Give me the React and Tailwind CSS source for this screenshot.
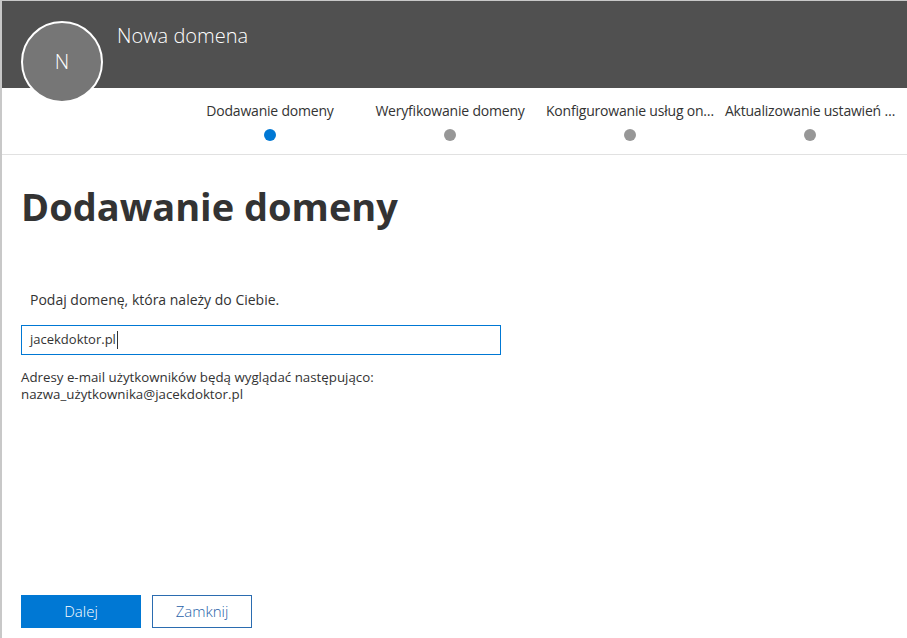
import React from 'react';

const steps = [
  { label: 'Dodawanie domeny', active: true },
  { label: 'Weryfikowanie domeny' },
  { label: 'Konfigurowanie usług on\u2026' },
  { label: 'Aktualizowanie ustawień \u2026' },
];

export default function App() {
  return (
    <div
      className="flex h-[638px] w-[907px] flex-col overflow-hidden border-t border-l-2 border-[#c8c8c8] bg-white text-[#333]"
      style={{ fontFamily: '"Open Sans", "Noto Sans", sans-serif' }}
    >
      {/* header */}
      <div className="relative h-[87px] shrink-0 bg-[#505050]">
        <div className="absolute left-[19px] top-[20px] flex h-[82px] w-[82px] items-center justify-center rounded-full border-2 border-white bg-[#767676] text-[20px] font-light text-white">
          N
        </div>
        <div className="pl-[115px] pt-[21px] text-[20px] font-light leading-[28px] text-white">Nowa domena</div>
      </div>

      {/* steps */}
      <div className="flex h-[67px] shrink-0 border-b border-[#e1e1e1] pl-[178px] pt-[13px]">
        {steps.map((s) => (
          <div key={s.label} className="flex w-[180px] flex-col items-center">
            <div className="whitespace-nowrap text-[14px] leading-[20px] tracking-[-0.2px] text-[#333]">{s.label}</div>
            <div className={`mt-[8px] h-[12px] w-[12px] rounded-full ${s.active ? 'bg-[#0078d4]' : 'bg-[#979797]'}`} />
          </div>
        ))}
      </div>

      {/* body */}
      <div className="flex flex-1 flex-col pl-[19px]">
        <h1 className="mt-[26px] text-[38px] font-bold leading-[50px] text-[#333]">Dodawanie domeny</h1>

        <p className="mt-[59px] pl-[9px] text-[14px] leading-[20px] text-[#333]">Podaj domenę, która należy do Ciebie.</p>

        <div className="mt-[15px] flex h-[30px] w-[480px] items-center border border-[#0078d4] px-[8px] text-[13px] text-[#333]">
          jacekdoktor.pl
          <span className="ml-[1px] inline-block h-[18px] w-px bg-[#333]" />
        </div>

        <div className="mt-[14px] text-[13.3px] leading-[17px] text-[#333]">
          <div>Adresy e-mail użytkowników będą wyglądać następująco:</div>
          <div>nazwa_użytkownika@jacekdoktor.pl</div>
        </div>

        <div className="mt-auto mb-[10px] flex gap-[11px]">
          <button className="h-[33px] w-[120px] bg-[#0078d4] text-[15px] font-light text-white">Dalej</button>
          <button className="h-[33px] w-[100px] border border-[#2b6cb0] bg-white text-[15px] font-light text-[#1f5fa8]">Zamknij</button>
        </div>
      </div>
    </div>
  );
}
